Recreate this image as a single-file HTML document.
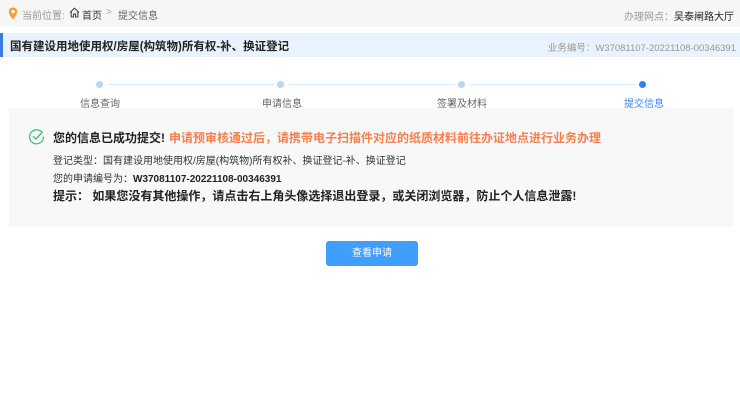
<!DOCTYPE html>
<html><head><meta charset="utf-8"><style>
*{margin:0;padding:0;box-sizing:border-box}
body{width:740px;height:412px;background:#fff;font-family:"Liberation Sans","Noto Sans CJK SC",sans-serif;position:relative;overflow:hidden;color:#333}
.abs{position:absolute;white-space:nowrap}
.top{position:absolute;left:0;top:0;width:740px;height:27px;background:#f6f6f6}
.title{position:absolute;left:0;top:33px;width:740px;height:24px;background:#e8f3fd;border-left:3px solid #3a7be0}
.dot{position:absolute;width:7px;height:7px;border-radius:50%;background:#b3d8f8;top:81px}
.line{position:absolute;height:1px;background:#d8ebfb;top:84px}
.box{position:absolute;left:9px;top:108px;width:725px;height:119px;background:#f8f8f8}
.btn{position:absolute;left:326px;top:241px;width:92px;height:25px;background:#409eff;border-radius:3px;color:#fff;font-size:10px;text-align:center;line-height:25px}
</style></head><body>
<div class="top"></div>
<svg class="abs" style="left:8px;top:7px" width="10" height="13" viewBox="0 0 10 13"><path d="M5 0.5C2.5 0.5 0.8 2.3 0.8 4.6 0.8 7.6 5 12.5 5 12.5S9.2 7.6 9.2 4.6C9.2 2.3 7.5 0.5 5 0.5Z" fill="#f5a031"/><circle cx="5" cy="4.6" r="1.7" fill="#fff"/></svg>
<div class="abs" style="left:22px;top:7px;font-size:10px;color:#999">当前位置:</div>
<svg class="abs" style="left:69px;top:7px" width="11" height="11" viewBox="0 0 11 11"><path d="M1 5.5L5.5 1.2 10 5.5M2.2 4.5V10H4.5V7H6.5V10H8.8V4.5" fill="none" stroke="#444" stroke-width="1.1"/></svg>
<div class="abs" style="left:82px;top:7px;font-size:10px;color:#333">首页</div>
<div class="abs" style="left:106px;top:7px;font-size:10px;color:#aaa">&gt;</div>
<div class="abs" style="left:118px;top:7px;font-size:10px;color:#666">提交信息</div>
<div class="abs" style="right:6px;top:8px;font-size:10px;color:#999">办理网点：<span style="color:#222">吴泰闸路大厅</span></div>
<div class="title"></div>
<div class="abs" style="left:10px;top:38px;font-size:11.5px;font-weight:bold;color:#222">国有建设用地使用权/房屋(构筑物)所有权-补、换证登记</div>
<div class="abs" style="right:4px;top:40px;font-size:9.5px;color:#999">业务编号：W37081107-20221108-00346391</div>
<div class="line" style="left:108px;width:166px"></div>
<div class="line" style="left:289px;width:166px"></div>
<div class="line" style="left:470px;width:166px"></div>
<div class="dot" style="left:96px"></div>
<div class="dot" style="left:277px"></div>
<div class="dot" style="left:458px"></div>
<div class="dot" style="left:639px;background:#2f80ed"></div>
<div class="abs" style="left:80px;top:95px;font-size:10px;color:#666">信息查询</div>
<div class="abs" style="left:262px;top:95px;font-size:10px;color:#666">申请信息</div>
<div class="abs" style="left:437px;top:95px;font-size:10px;color:#666">签署及材料</div>
<div class="abs" style="left:624px;top:95px;font-size:10px;color:#3a86f0">提交信息</div>
<div class="box"></div>
<svg class="abs" style="left:28px;top:128px" width="17" height="17" viewBox="0 0 17 17"><path d="M14.5 5.2A7 7 0 1 0 15.5 8.5" fill="none" stroke="#4cc073" stroke-width="1.3"/><path d="M5 8.3L7.8 11 13.6 5" fill="none" stroke="#4cc073" stroke-width="1.4"/></svg>
<div class="abs" style="left:53px;top:129px;font-size:12px;font-weight:bold;color:#222">您的信息已成功提交!<span style="color:#f77f4d;margin-left:4px">申请预审核通过后，请携带电子扫描件对应的纸质材料前往办证地点进行业务办理</span></div>
<div class="abs" style="left:53px;top:152px;font-size:10px;color:#333">登记类型：国有建设用地使用权/房屋(构筑物)所有权补、换证登记-补、换证登记</div>
<div class="abs" style="left:53px;top:170px;font-size:10px;color:#333">您的申请编号为：<b style="color:#222">W37081107-20221108-00346391</b></div>
<div class="abs" style="left:53px;top:187px;font-size:12px;font-weight:bold;color:#222">提示：&nbsp;如果您没有其他操作，请点击右上角头像选择退出登录，或关闭浏览器，防止个人信息泄露!</div>
<div class="btn">查看申请</div>
</body></html>
